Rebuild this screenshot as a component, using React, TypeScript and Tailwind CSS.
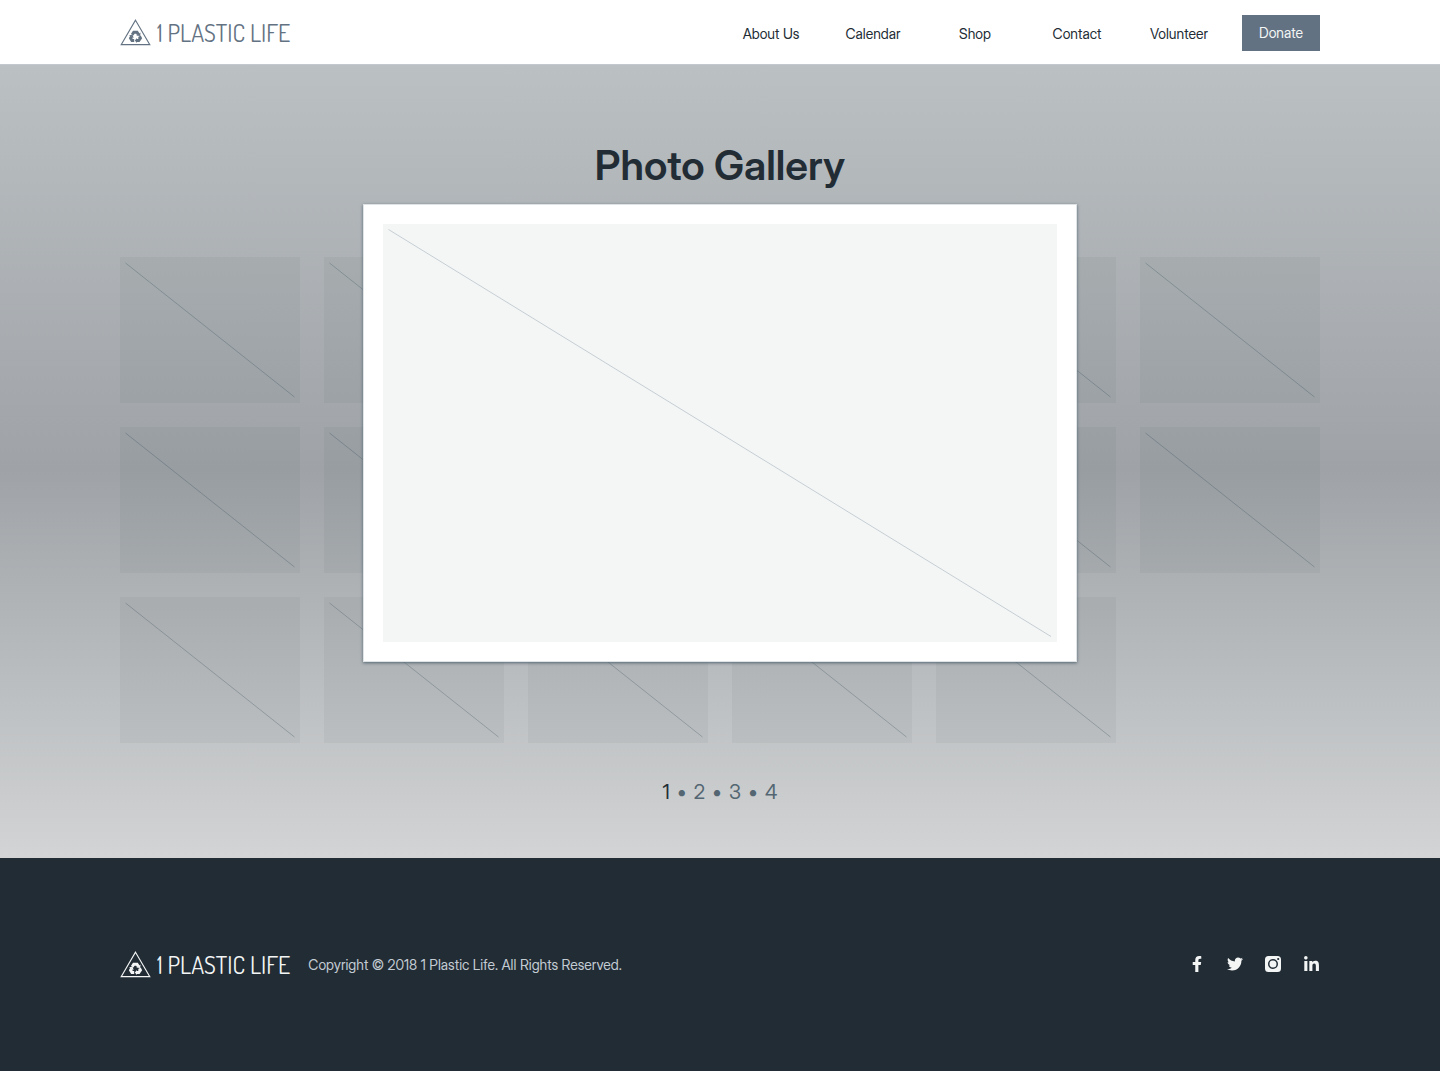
import { FaFacebookF, FaLinkedinIn, FaTwitter } from "react-icons/fa";

const navItems = ["About Us", "Calendar", "Shop", "Contact", "Volunteer"];
const pages = [1, 2, 3, 4];
const photos = Array.from({ length: 17 }, (_, i) => i + 1);

function Logo() {
  return (
    <a href="#home" className="flex items-center gap-1.5" aria-label="1 Plastic Life">
      <svg viewBox="0 0 31 27" className="h-[27px] w-[31px]" fill="none" stroke="currentColor">
        <path d="M15.5 1.2 29.8 25.6H1.2Z" strokeWidth="1.1" />
        <g strokeWidth="3">
          <path d="M12.2 15.8 13.8 13.3H17L18.3 15.4" />
          <path d="M19.4 17.3 20.4 19.2 18.8 21.4H16.4" />
          <path d="M14.2 21.4H12L10.6 19.2 11.5 17.6" />
        </g>
        <g fill="currentColor" stroke="none">
          <path d="M16.3 16.4 20.2 16.9 20.5 13.4Z" />
          <path d="M17 18.9V23.9L14.8 21.4Z" />
          <path d="M9 16.6 12.6 15.6 13.6 19Z" />
        </g>
      </svg>
      <span className="pt-0.5 font-['Dosis','Lato',sans-serif] text-[24px] leading-7 font-normal whitespace-nowrap">
        1 PLASTIC LIFE
      </span>
    </a>
  );
}

function InstagramIcon() {
  return (
    <svg viewBox="0 0 16 16" className="size-4" fill="currentColor">
      <path
        fillRule="evenodd"
        d="M3.5 0h9A3.5 3.5 0 0 1 16 3.5v9a3.5 3.5 0 0 1-3.5 3.5h-9A3.5 3.5 0 0 1 0 12.5v-9A3.5 3.5 0 0 1 3.5 0ZM8 3a5 5 0 1 0 0 10A5 5 0 0 0 8 3Zm0 1.5a3.5 3.5 0 1 1 0 7 3.5 3.5 0 0 1 0-7ZM13.2 1.9a1.1 1.1 0 1 0 0 2.2 1.1 1.1 0 0 0 0-2.2Z"
      />
    </svg>
  );
}

const socials = [
  { name: "Facebook", icon: <FaFacebookF className="size-4" /> },
  { name: "Twitter", icon: <FaTwitter className="size-4" /> },
  { name: "Instagram", icon: <InstagramIcon /> },
  { name: "LinkedIn", icon: <FaLinkedinIn className="size-[17px]" /> },
];

export default function App() {
  return (
    <div className="flex min-h-screen flex-col bg-[#222c35] font-['Inter_Display','Inter',sans-serif] text-[#222c35]">
      <header className="border-b border-[#c3c8cf] bg-white">
        <div className="mx-auto flex h-16 max-w-[1200px] items-center justify-between text-[#637282]">
          <Logo />
          <nav className="flex items-center gap-6 text-sm">
            {navItems.map((item) => (
              <a key={item} href="#nav" className="w-[78px] pt-1 text-center whitespace-nowrap text-[#222c35]">
                {item}
              </a>
            ))}
            <button type="button" className="mt-0.5 h-9 w-[78px] bg-[#637282] text-[#f4f6f6]">
              Donate
            </button>
          </nav>
        </div>
      </header>

      <main className="relative bg-linear-to-b from-[#bbc0c3] via-[#9fa3a7] via-51% to-[#d2d4d5] pt-[76px] pb-[52px]">
        <h1 className="text-center text-[41px] leading-[48px] font-semibold">Photo Gallery</h1>
        <div className="mx-auto mt-[68px] grid max-w-[1200px] grid-cols-6 gap-6">
          {photos.map((photo) => (
            <button key={photo} type="button" aria-label={`Photo ${photo}`} className="bg-[#001010]/4">
              <svg viewBox="0 0 180 146" className="w-full" fill="none" stroke="#35505e" strokeOpacity="0.3">
                <path d="M5.5 6 174.5 140" />
              </svg>
            </button>
          ))}
        </div>
        <nav aria-label="Pages" className="mt-[35px] flex items-center justify-center gap-[7px] text-xl leading-7 text-[#536672]">
          {pages.map((page) => (
            <span key={page} className="flex items-center gap-[7px]">
              {page > 1 && <span>•</span>}
              <a href="#page" className={page === 1 ? "text-[#222c35]" : ""}>
                {page}
              </a>
            </span>
          ))}
        </nav>

        <div
          role="dialog"
          aria-label="Selected photo"
          className="absolute inset-x-0 top-[139px] mx-auto max-w-[714px] border border-[#dfe3e6] bg-white p-[19px] shadow-[0_1px_3px_#536672]"
        >
          <svg viewBox="0 0 674 418" className="w-full bg-[#f4f6f6]" fill="none" stroke="#c6ced3">
            <path d="M5.5 5.5 668 412.5" />
          </svg>
        </div>
      </main>

      <footer className="py-[91px] text-[#f4f6f6]">
        <div className="mx-auto flex max-w-[1200px] items-center justify-between">
          <div className="flex items-center gap-[18px]">
            <Logo />
            <p className="pt-0.5 text-sm text-[#c3cbd3]">
              Copyright © 2018 1 Plastic Life. All Rights Reserved.
            </p>
          </div>
          <div className="flex items-center gap-[22px]">
            {socials.map((social) => (
              <a key={social.name} href="#social" aria-label={social.name}>
                {social.icon}
              </a>
            ))}
          </div>
        </div>
      </footer>
    </div>
  );
}
